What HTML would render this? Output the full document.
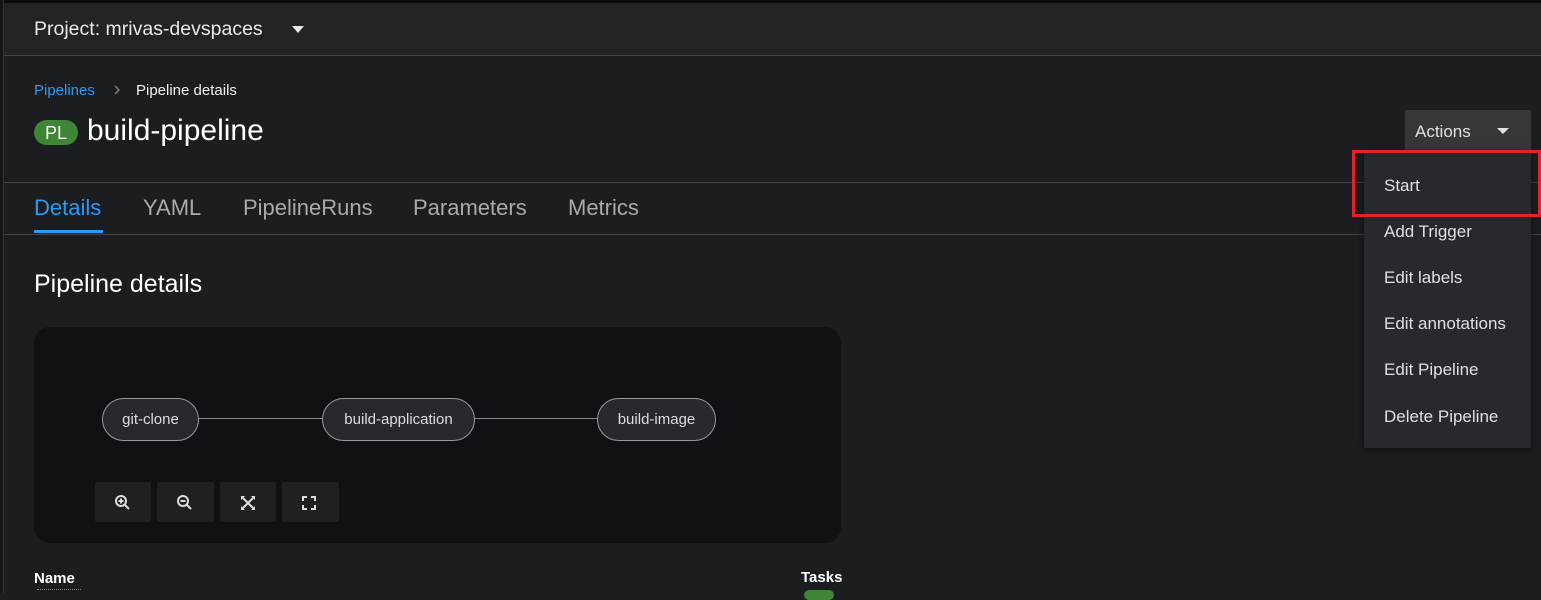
<!DOCTYPE html>
<html><head><style>
*{margin:0;padding:0;box-sizing:border-box}
body{width:1541px;height:593px;background:#1b1d21;font-family:"Liberation Sans",sans-serif;color:#e0e0e0;position:relative;overflow:hidden}
.a{position:absolute}
</style></head><body>
<div class="a" style="left:0;top:0;width:1541px;height:3px;background:#0b0b0b"></div>
<div class="a" style="left:0;top:0;width:4px;height:593px;background:#141517;border-right:1px solid #333"></div>
<div class="a" style="left:4px;top:3px;width:1537px;height:53px;background:#212427;border-bottom:1px solid #444"></div>
<div class="a" style="left:34px;top:18px;font-size:19.5px;color:#e8e8e8">Project: mrivas-devspaces</div>
<svg class="a" style="left:292px;top:26px" width="12" height="8"><path d="M0 0H12L6 7Z" fill="#e8e8e8"/></svg>
<div class="a" style="left:34px;top:82px;font-size:15px;color:#2b9af3">Pipelines</div>
<svg class="a" style="left:113px;top:85px" width="8" height="10"><path d="M2 1L6 5L2 9" stroke="#777" stroke-width="1.6" fill="none"/></svg>
<div class="a" style="left:136px;top:82px;font-size:15px;color:#f0f0f0">Pipeline details</div>
<div class="a" style="left:34px;top:120px;width:44px;height:25px;border-radius:13px;background:#3e8635;color:#fff;font-size:18px;text-align:center;line-height:26px">PL</div>
<div class="a" style="left:87px;top:114px;font-size:30px;color:#fff">build-pipeline</div>
<div class="a" style="left:1405px;top:110px;width:126px;height:40px;background:#36373b"></div>
<div class="a" style="left:1415px;top:122px;font-size:17px;color:#e0e0e0">Actions</div>
<svg class="a" style="left:1497px;top:128px" width="12" height="7"><path d="M0 0H12L6 6Z" fill="#e0e0e0"/></svg>
<div class="a" style="left:4px;top:182px;width:1537px;height:1px;background:#444"></div>
<div class="a" style="left:4px;top:234px;width:1537px;height:1px;background:#444"></div>
<div class="a" style="left:34px;top:195px;font-size:22px;color:#2b9af3">Details</div>
<div class="a" style="left:34px;top:230px;width:69px;height:3px;background:#2b9af3"></div>
<div class="a" style="left:143px;top:195px;font-size:22px;color:#aaa">YAML</div>
<div class="a" style="left:243px;top:195px;font-size:22px;color:#aaa">PipelineRuns</div>
<div class="a" style="left:413px;top:195px;font-size:22px;color:#aaa">Parameters</div>
<div class="a" style="left:568px;top:195px;font-size:22px;color:#aaa">Metrics</div>
<div class="a" style="left:34px;top:270px;font-size:25px;color:#fff">Pipeline details</div>
<div class="a" style="left:34px;top:327px;width:807px;height:216px;background:#0f1214;border-radius:16px"></div>
<div class="a" style="left:198px;top:418px;width:125px;height:1px;background:#888"></div>
<div class="a" style="left:474px;top:418px;width:124px;height:1px;background:#888"></div>
<div class="a" style="left:102px;top:398px;width:97px;height:43px;border:1px solid #999;border-radius:22px;background:#26292d;font-size:15px;text-align:center;line-height:41px;color:#ddd">git-clone</div>
<div class="a" style="left:322px;top:398px;width:153px;height:43px;border:1px solid #999;border-radius:22px;background:#26292d;font-size:15px;text-align:center;line-height:41px;color:#ddd">build-application</div>
<div class="a" style="left:597px;top:398px;width:119px;height:43px;border:1px solid #999;border-radius:22px;background:#26292d;font-size:15px;text-align:center;line-height:41px;color:#ddd">build-image</div>
<div class="a" style="left:95px;top:482px;width:56px;height:40px;background:#1e2023;border-radius:2px"></div>
<div class="a" style="left:157px;top:482px;width:57px;height:40px;background:#1e2023;border-radius:2px"></div>
<div class="a" style="left:220px;top:482px;width:56px;height:40px;background:#1e2023;border-radius:2px"></div>
<div class="a" style="left:282px;top:482px;width:57px;height:40px;background:#1e2023;border-radius:2px"></div>
<svg class="a" style="left:114px;top:494px" width="18" height="18"><circle cx="7" cy="7" r="5" stroke="#ddd" stroke-width="2" fill="none"/><path d="M11 11L15 15M7 4.5V9.5M4.5 7H9.5" stroke="#ddd" stroke-width="2"/></svg>
<svg class="a" style="left:176px;top:494px" width="18" height="18"><circle cx="7" cy="7" r="5" stroke="#ddd" stroke-width="2" fill="none"/><path d="M11 11L15 15M4.5 7H9.5" stroke="#ddd" stroke-width="2"/></svg>
<svg class="a" style="left:240px;top:495px" width="16" height="16"><path d="M1 1H5L1 5ZM15 1H11L15 5ZM1 15H5L1 11ZM15 15H11L15 11Z" fill="#ddd"/><path d="M3 3L13 13M13 3L3 13" stroke="#ddd" stroke-width="2"/></svg>
<svg class="a" style="left:302px;top:496px" width="14" height="14"><path d="M1 5V1H5M9 1H13V5M13 9V13H9M5 13H1V9" stroke="#ddd" stroke-width="2" fill="none"/></svg>
<div class="a" style="left:34px;top:570px;font-size:15px;font-weight:bold;color:#fff">Name</div>
<div class="a" style="left:37px;top:589px;width:44px;border-top:1px dotted #888"></div>
<div class="a" style="left:801px;top:569px;font-size:15px;font-weight:bold;color:#fff">Tasks</div>
<div class="a" style="left:804px;top:590px;width:30px;height:10px;border-radius:5px;background:#3e8635"></div>
<div class="a" style="left:1364px;top:150px;width:167px;height:298px;background:#26292d;box-shadow:0 3px 8px rgba(0,0,0,.5)"></div>
<div class="a" style="left:1384px;top:176px;font-size:17px;color:#e0e0e0">Start</div>
<div class="a" style="left:1384px;top:222px;font-size:17px;color:#e0e0e0">Add Trigger</div>
<div class="a" style="left:1384px;top:268px;font-size:17px;color:#e0e0e0">Edit labels</div>
<div class="a" style="left:1384px;top:314px;font-size:17px;color:#e0e0e0">Edit annotations</div>
<div class="a" style="left:1384px;top:360px;font-size:17px;color:#e0e0e0">Edit Pipeline</div>
<div class="a" style="left:1384px;top:407px;font-size:17px;color:#e0e0e0">Delete Pipeline</div>
<div class="a" style="left:1352px;top:150px;width:189px;height:67px;border:3px solid #e5212b"></div>
</body></html>
